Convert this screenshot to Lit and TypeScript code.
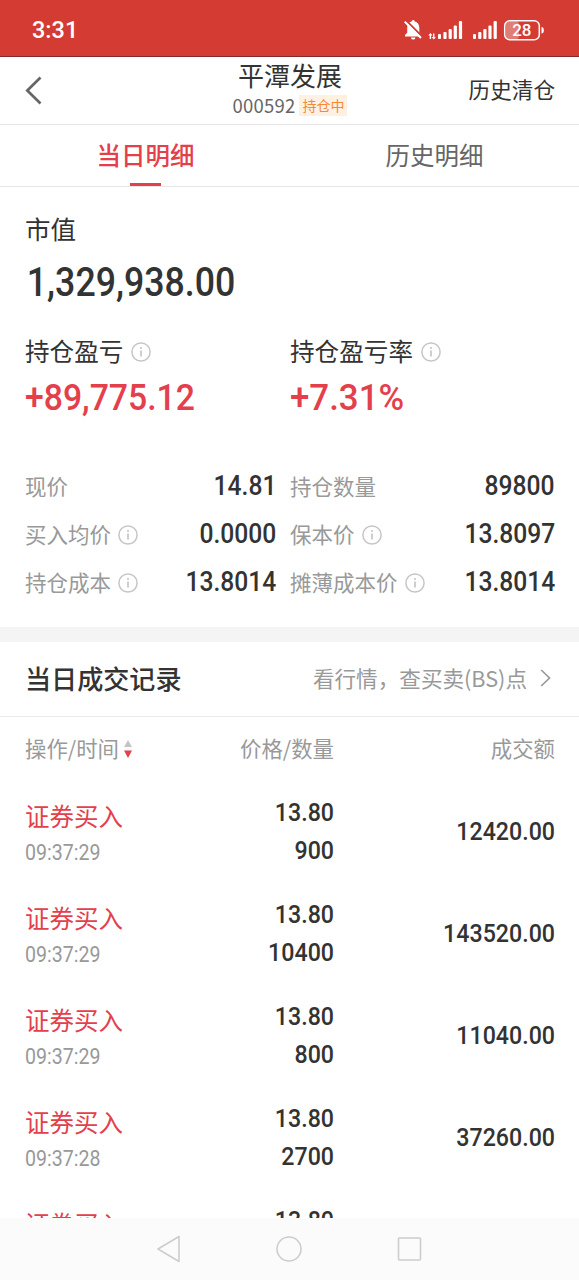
import { LitElement, html, css } from "lit";
import { customElement, property } from "lit/decorators.js";

@customElement("info-icon")
class InfoIcon extends LitElement {
  static styles = css`
    :host { display: block; width: 20px; height: 20px; flex: none; }
    svg { display: block; }
  `;
  render() {
    return html`<svg width="20" height="20" viewBox="0 0 20 20" fill="none" stroke="#c6c6c6">
      <circle cx="10" cy="10" r="9.1" stroke-width="1.5"></circle>
      <path d="M10 8.6V14.6" stroke-width="1.7"></path>
      <circle cx="10" cy="6" r="1.05" fill="#c6c6c6" stroke="none"></circle>
    </svg>`;
  }
}

@customElement("stat-line")
class StatLine extends LitElement {
  @property() label = "";
  @property() value = "";
  @property({ type: Boolean }) info = false;
  static styles = css`
    :host { display: flex; align-items: center; height: 48px; }
    .label { font-size: 21.5px; color: #999; white-space: nowrap; padding-bottom: 2px; }
    info-icon { margin-left: 7px; }
    .value {
      margin-left: auto; font: 500 28px/46px Roboto, sans-serif; color: #333; padding-bottom: 2px;
      transform: scaleX(0.88); transform-origin: right center; white-space: nowrap;
    }
  `;
  render() {
    return html`<span class="label">${this.label}</span>
      ${this.info ? html`<info-icon></info-icon>` : ""}
      <span class="value">${this.value}</span>`;
  }
}

@customElement("trade-row")
class TradeRow extends LitElement {
  @property() time = "";
  @property() price = "";
  @property() count = "";
  @property() amount = "";
  static styles = css`
    :host {
      display: grid; grid-template-columns: 154px 155px 1fr; align-items: center;
      height: 102px; padding: 0 24px 0 25px; box-sizing: border-box; flex: none;
    }
    .side { padding-top: 6px; }
    .op { font-size: 24.5px; line-height: 38px; color: #e4404c; white-space: nowrap; }
    .time {
      font: 400 21.5px/36px Roboto, sans-serif; color: #999; height: 36px;
      transform: scaleX(0.91); transform-origin: left center; white-space: nowrap;
    }
    .nums {
      font: 500 26.5px/38.5px Roboto, sans-serif; color: #333; text-align: right;
      transform: scaleX(0.875); transform-origin: right center; white-space: nowrap;
    }
  `;
  render() {
    return html`<div class="side">
        <div class="op">证券买入</div>
        <div class="time">${this.time}</div>
      </div>
      <div class="nums"><div>${this.price}</div><div>${this.count}</div></div>
      <div class="nums">${this.amount}</div>`;
  }
}

const stats = [
  ["现价", "14.81", false], ["持仓数量", "89800", false],
  ["买入均价", "0.0000", true], ["保本价", "13.8097", true],
  ["持仓成本", "13.8014", true], ["摊薄成本价", "13.8014", true],
] as const;

const trades = [
  ["09:37:29", "13.80", "900", "12420.00"],
  ["09:37:29", "13.80", "10400", "143520.00"],
  ["09:37:29", "13.80", "800", "11040.00"],
  ["09:37:28", "13.80", "2700", "37260.00"],
  ["", "13.80", "", ""],
];

@customElement("app-root")
class AppRoot extends LitElement {
  static styles = css`
    :host {
      display: flex; flex-direction: column; height: 1280px; overflow: hidden;
      background: #fff; color: #333;
      font-family: "Noto Sans CJK SC", sans-serif; line-height: 1;
    }
    * { box-sizing: border-box; }
    svg { display: block; flex: none; }
    .status {
      height: 57px; flex: none; background: #d33b33; border-bottom: 1px solid #84292a;
      display: flex; align-items: center; justify-content: space-between;
      padding: 3px 34px 0 32px; color: #fff;
    }
    .clock { font: 500 23.5px/30px Roboto, sans-serif; }
    .header {
      height: 68px; flex: none; border-bottom: 1px solid #e6e6e6;
      display: grid; grid-template-columns: 1fr auto 1fr; align-items: center;
      padding: 0 24px 0 25px;
    }
    .heading { display: flex; flex-direction: column; align-items: center; padding-bottom: 4px; }
    .name { font-size: 26px; line-height: 34px; }
    .code-line { display: flex; align-items: center; gap: 4px; height: 28px; }
    .code { font-size: 18.5px; letter-spacing: 0.2px; color: #666; padding-bottom: 1px; }
    .badge {
      background: #fff0e4; color: #f38a35; font-size: 14px; line-height: 21px;
      width: 48px; text-align: center;
    }
    .history { font-size: 21.6px; text-align: right; padding-bottom: 3px; }
    .tabs { height: 62px; flex: none; display: flex; border-bottom: 1px solid #e6e6e6; padding-left: 1px; }
    .tab {
      flex: 1; display: flex; flex-direction: column; align-items: center;
      font-size: 24.5px; line-height: 58px; color: #666;
    }
    .tab.active { color: #e4404c; font-weight: 500; }
    .label { height: 57.5px; padding-top: 0.5px; }
    .bar { width: 31px; height: 3px; background: #e4404c; }
    .summary { height: 440px; flex: none; padding: 22px 24px 0 25px; }
    .cap { font-size: 25.5px; line-height: 38px; }
    .total {
      font: 500 40px/72px Roboto, sans-serif; height: 84px; padding-left: 2px;
      transform: scaleX(0.893); transform-origin: left center;
    }
    .cols { display: grid; grid-template-columns: 251px 265px; column-gap: 14px; }
    .sub { display: flex; align-items: center; gap: 8px; font-size: 24.6px; line-height: 38px; }
    .sub info-icon { margin-top: 3px; }
    .gain {
      font: 500 36.5px/58px Roboto, sans-serif; color: #e4404c;
      transform: scaleX(0.925); transform-origin: left center; white-space: nowrap;
    }
    .rate { transform: scaleX(0.955); }
    .stats { padding-top: 36px; }
    .divider { height: 15px; flex: none; background: #f4f4f4; }
    .records {
      height: 75px; flex: none; border-bottom: 1px solid #e9e9e9;
      display: flex; align-items: center; justify-content: space-between; padding: 0 28px 2px 25px;
    }
    .title { font-size: 26.1px; font-weight: 500; }
    .link { display: flex; align-items: center; gap: 13px; font-size: 21.6px; color: #999; }
    .thead {
      height: 63px; flex: none; display: grid; grid-template-columns: 154px 155px 1fr;
      align-items: center; padding: 0 24px 1px 25px; font-size: 21.4px; color: #999; text-align: right;
    }
    .sort { display: flex; align-items: center; gap: 5px; }
    .sort svg { margin-top: 2px; }
    .list { flex: 1; min-height: 0; overflow: hidden; display: flex; flex-direction: column; }
    .nav {
      height: 62px; flex: none; background: #fbfbfb; display: flex;
      align-items: center; justify-content: center; gap: 92px; padding-right: 1px;
    }
  `;

  render() {
    return html`
      <div class="status">
        <span class="clock">3:31</span>
        <svg width="142" height="26" viewBox="403 16 142 26">
          <g fill="#fff">
            <path d="M405 35.5h16.5v-1.4l-2.2-2.4V27c0-3.6-1.8-5.7-4.5-6.4a1.6 1.6 0 0 0-3.2 0c-2.7.7-4.4 2.8-4.4 6.4v4.7L405 34.1z"></path>
            <path d="M411 36.4h4.4a2.2 2.2 0 0 1-4.4 0z"></path>
            <path d="M406 19.4L422.3 35.8" stroke="#d33b33" stroke-width="2"></path>
            <path d="M404.7 20.6L421 37" stroke="#fff" stroke-width="2"></path>
            <rect x="429.7" y="33" width="1.4" height="5"></rect><rect x="433" y="32.5" width="1.4" height="5.5"></rect>
            <path d="M428.3 34.5l2.1-2.5 2.1 2.5zM431.6 36l2.1 2.5 2.1-2.5z"></path>
            <rect x="438" y="33" width="3" height="5" rx="1"></rect>
            <rect x="443.4" y="31" width="3.2" height="7" rx="1"></rect>
            <rect x="448.6" y="28" width="3.2" height="10" rx="1"></rect>
            <rect x="453.7" y="24.5" width="3.2" height="13.5" rx="1"></rect>
            <rect x="458.9" y="20" width="3.2" height="18" rx="1"></rect>
            <rect x="473" y="33" width="3" height="5" rx="1"></rect>
            <rect x="478.2" y="31" width="3.2" height="7" rx="1"></rect>
            <rect x="483.3" y="28" width="3.2" height="10" rx="1"></rect>
            <rect x="488.4" y="24.5" width="3.2" height="13.5" rx="1"></rect>
            <rect x="493.6" y="20" width="3.2" height="18" rx="1"></rect>
            <path d="M541.5 26c1.5 0 2.3 1 2.3 3.2s-.8 3.2-2.3 3.2z"></path>
          </g>
          <rect x="506" y="20.5" width="13" height="17.5" rx="3" fill="#e27c77"></rect>
          <rect x="504.7" y="19.7" width="34.6" height="19" rx="5" fill="none" stroke="#fff" stroke-width="1.5"></rect>
          <text x="521.8" y="35.3" text-anchor="middle" font-family="Roboto, sans-serif" font-weight="500" font-size="17" fill="#fff">28</text>
        </svg>
      </div>

      <div class="header">
        <svg width="18" height="30" viewBox="0 0 18 30" fill="none" stroke="#666" stroke-width="2.7">
          <path d="M15.5 1.5L2.3 14.5L15.5 27.5"></path>
        </svg>
        <div class="heading">
          <div class="name">平潭发展</div>
          <div class="code-line"><span class="code">000592</span><span class="badge">持仓中</span></div>
        </div>
        <div class="history">历史清仓</div>
      </div>

      <div class="tabs">
        <div class="tab active"><div class="label">当日明细</div><div class="bar"></div></div>
        <div class="tab"><div class="label">历史明细</div></div>
      </div>

      <div class="summary">
        <div class="cap">市值</div>
        <div class="total">1,329,938.00</div>
        <div class="cols">
          <div>
            <div class="sub">持仓盈亏<info-icon></info-icon></div>
            <div class="gain">+89,775.12</div>
          </div>
          <div>
            <div class="sub">持仓盈亏率<info-icon></info-icon></div>
            <div class="gain rate">+7.31%</div>
          </div>
        </div>
        <div class="cols stats">
          ${stats.map(([l, v, i]) => html`<stat-line .label=${l} .value=${v} .info=${i}></stat-line>`)}
        </div>
      </div>

      <div class="divider"></div>

      <div class="records">
        <span class="title">当日成交记录</span>
        <span class="link">看行情，查买卖(BS)点
          <svg width="11" height="18" viewBox="0 0 11 18" fill="none" stroke="#999" stroke-width="1.7"><path d="M1.2 1L9.5 9L1.2 17"></path></svg>
        </span>
      </div>

      <div class="thead">
        <span class="sort">操作/时间
          <svg width="8" height="18" viewBox="0 0 8 18"><path d="M4 0L8 7H0z" fill="#c4c4c4"></path><path d="M0 10.5H8L4 18z" fill="#e4404c"></path></svg>
        </span>
        <span>价格/数量</span>
        <span>成交额</span>
      </div>

      <div class="list">
        ${trades.map(([t, p, c, a]) => html`<trade-row .time=${t} .price=${p} .count=${c || "\u00a0"} .amount=${a}></trade-row>`)}
      </div>

      <div class="nav">
        <svg width="28" height="30" viewBox="0 0 28 30" fill="none" stroke="#cdcdcd" stroke-width="1.6" stroke-linejoin="round"><path d="M24 2.5V27.5L3 15z"></path></svg>
        <svg width="28" height="30" viewBox="0 0 28 30" fill="none" stroke="#cdcdcd" stroke-width="1.6"><circle cx="14" cy="15" r="12"></circle></svg>
        <svg width="28" height="30" viewBox="0 0 28 30" fill="none" stroke="#cdcdcd" stroke-width="1.6"><rect x="3.5" y="4" width="22" height="22" rx="1"></rect></svg>
      </div>
    `;
  }
}
